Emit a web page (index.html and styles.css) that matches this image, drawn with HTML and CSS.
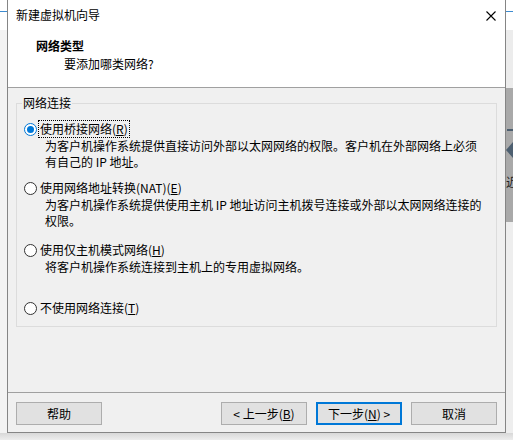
FILE: index.html
```html
<!DOCTYPE html>
<html lang="zh-CN">
<head>
<meta charset="utf-8">
<title>新建虚拟机向导</title>
<link rel="stylesheet" href="styles.css">
</head>
<body>
<div class="screen">
  <div class="left-edge">
    <div class="edge-top"><div class="bg-line"></div></div>
  </div>
  <div class="dialog">
    <div class="titlebar">
      <span class="title">新建虚拟机向导</span>
      <svg class="close" width="10" height="10" viewBox="0 0 10 10"><path d="M0.5 0.5 L9.5 9.5 M9.5 0.5 L0.5 9.5" stroke="#000" stroke-width="1.1" fill="none"/></svg>
    </div>
    <div class="header">
      <div class="h-title">网络类型</div>
      <div class="h-sub">要添加哪类网络?</div>
    </div>
    <div class="body">
      <div class="group">
        <div class="group-title">网络连接</div>
        <div class="option opt1">
          <div class="row"><span class="radio checked"></span><span class="label focused">使用桥接网络(<u>R</u>)</span></div>
          <div class="desc">为客户机操作系统提供直接访问外部以太网网络的权限。客户机在外部网络上必须<br>有自己的 IP 地址。</div>
        </div>
        <div class="option opt2">
          <div class="row"><span class="radio"></span><span class="label">使用网络地址转换(NAT)(<u>E</u>)</span></div>
          <div class="desc">为客户机操作系统提供使用主机 IP 地址访问主机拨号连接或外部以太网网络连接的<br>权限。</div>
        </div>
        <div class="option opt3">
          <div class="row"><span class="radio"></span><span class="label">使用仅主机模式网络(<u>H</u>)</span></div>
          <div class="desc">将客户机操作系统连接到主机上的专用虚拟网络。</div>
        </div>
        <div class="option opt4">
          <div class="row"><span class="radio"></span><span class="label">不使用网络连接(<u>T</u>)</span></div>
        </div>
      </div>
    </div>
    <div class="footer">
      <button class="btn">帮助</button>
      <div class="spacer"></div>
      <button class="btn">&lt; 上一步(<u>B</u>)</button>
      <button class="btn default">下一步(<u>N</u>) &gt;</button>
      <button class="btn">取消</button>
    </div>
  </div>
  <div class="right-edge">
    <div class="edge-top"><div class="bg-line"></div></div>
    <div class="re-light"></div>
    <div class="re-dark">
      <div class="re-dash"></div>
      <svg class="re-diamond" width="7" height="16" viewBox="0 0 7 16"><polygon points="7,0 0,8 7,16" fill="#4d5f70"/></svg>
      <span class="re-char">近</span>
    </div>
    <div class="re-light2"></div>
  </div>
</div>
<div class="shadow"></div>
</body>
</html>
```

FILE: styles.css
```css
* { box-sizing: border-box; }
html, body { margin: 0; padding: 0; }
body {
  width: 513px;
  height: 440px;
  overflow: hidden;
  background: #ececec;
  font-family: "Noto Sans CJK SC", "Microsoft YaHei", sans-serif;
  font-size: 12px;
  color: #000;
}
.screen {
  display: flex;
  height: 433px;
}
.left-edge {
  width: 7px;
  background: #f3f3f3;
}
.edge-top {
  height: 30px;
  background: #fff;
  padding-top: 11px;
}
.bg-line {
  height: 1px;
  background: #3d8bd0;
}
.dialog {
  width: 499px;
  height: 433px;
  border: 1px solid #858585;
  border-top: none;
  background: #f0f0f0;
  display: flex;
  flex-direction: column;
}
.titlebar {
  height: 30px;
  background: #fff;
  display: flex;
  align-items: center;
  justify-content: space-between;
  padding: 0 9px 0 8px;
  line-height: 16px;
}
.close { display: block; margin-top: 1px; }
.header {
  height: 58px;
  background: #fff;
  border-bottom: 1px solid #a0a0a0;
  padding-top: 7px;
  line-height: 18px;
}
.h-title {
  padding-left: 28px;
  font-weight: bold;
}
.h-sub {
  padding-left: 56px;
}
.body {
  height: 304px;
  padding: 15px 8px 0 8px;
}
.group {
  border: 1px solid #dcdcdc;
  padding: 0 0 9px 0;
  width: 481px;
}
.group-title {
  width: fit-content;
  margin: -9px 0 0 5px;
  padding: 0 1px;
  background: #f0f0f0;
  line-height: 16px;
}
.option { padding-left: 7px; }
.opt1 { margin-top: 9px; }
.opt2 { margin-top: 9px; }
.opt3 { margin-top: 12px; }
.opt4 { margin-top: 24px; }
.row {
  display: flex;
  align-items: center;
  height: 18px;
}
.radio {
  width: 13px;
  height: 13px;
  border-radius: 50%;
  border: 1px solid #333;
  background: #fff;
  flex: none;
  position: relative;
}
.radio.checked {
  border-color: #0078d7;
}
.radio.checked::after {
  content: "";
  position: absolute;
  left: 2px;
  top: 2px;
  width: 7px;
  height: 7px;
  border-radius: 50%;
  background: #0078d7;
}
.label {
  margin-left: 1px;
  padding: 0 1px;
  border: 1px solid transparent;
  line-height: 16px;
  white-space: nowrap;
}
.label.focused {
  border: 1px dotted #000;
}
.desc {
  margin-left: 21px;
  line-height: 16px;
  white-space: nowrap;
}
u { text-decoration: underline; text-underline-offset: 1px; }
.footer {
  flex: 1;
  border-top: 1px solid #a0a0a0;
  display: flex;
  align-items: flex-start;
  padding: 9px 8px 0 8px;
  gap: 9px;
}
.spacer { flex: 1; }
.btn {
  width: 86px;
  height: 23px;
  margin: 0;
  padding: 0;
  border: 1px solid #adadad;
  background: #e1e1e1;
  font-family: "Noto Sans CJK SC", "Microsoft YaHei", sans-serif;
  font-size: 12px;
  line-height: 16px;
  color: #000;
}
.btn.default {
  border: 2px solid #0078d7;
}
.right-edge {
  width: 7px;
  display: flex;
  flex-direction: column;
}
.re-light {
  height: 58px;
  background: #ececec;
}
.re-dark {
  height: 134px;
  background: #a9a9a9;
  display: flex;
  flex-direction: column;
  align-items: flex-start;
  overflow: hidden;
  padding-top: 41px;
}
.re-dash {
  width: 7px;
  height: 2px;
  margin-left: 1px;
  background: #4d5f70;
}
.re-diamond {
  display: block;
  margin-top: 11px;
}
.re-char {
  margin-top: 17px;
  font-size: 12px;
  line-height: 14px;
  color: #222;
}
.re-light2 {
  flex: 1;
  background: #eeeeee;
}
.shadow {
  height: 7px;
  background: linear-gradient(#d8d8d8, #ededed);
}
```
